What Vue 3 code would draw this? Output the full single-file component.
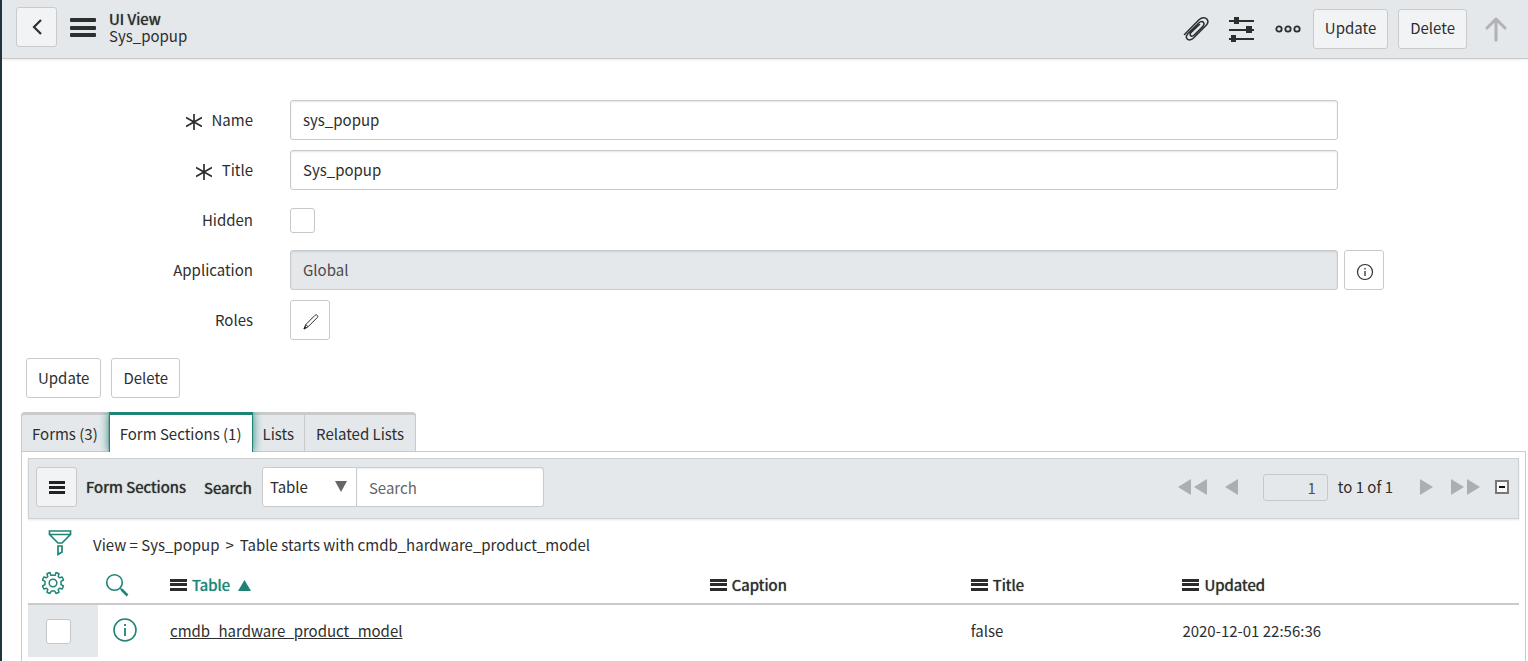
<script setup>
import { ref } from 'vue'

const name = ref('sys_popup')
const title = ref('Sys_popup')
const hidden = ref(false)
const searchField = ref('Table')
const searchText = ref('')
const activeTab = ref('Form Sections (1)')
const tabs = ['Forms (3)', 'Form Sections (1)', 'Lists', 'Related Lists']
const columns = [
  { label: 'Table', cls: 'col-table', sorted: true },
  { label: 'Caption', cls: 'col-caption' },
  { label: 'Title', cls: 'col-title' },
  { label: 'Updated', cls: 'col-updated' },
]
const rows = [
  { table: 'cmdb_hardware_product_model', caption: '', title: 'false', updated: '2020-12-01 22:56:36' },
]
</script>

<template>
  <div class="page">
    <header class="header">
      <button class="btn back" aria-label="Back">
        <svg width="12" height="18" viewBox="0 0 12 18"><path d="M10 2 3 9l7 7" fill="none" stroke="#2e2e2e" stroke-width="2.2" /></svg>
      </button>
      <button class="bare menu" aria-label="Additional actions">
        <svg width="26" height="20" viewBox="0 0 26 20" fill="#2b2f2f"><rect y="0" width="26" height="4" rx="1" /><rect y="8" width="26" height="4" rx="1" /><rect y="15" width="26" height="4" rx="1" /></svg>
      </button>
      <div class="heading">
        <h1 class="bold">UI View</h1>
        <span>Sys_popup</span>
      </div>
      <div class="actions">
        <button class="bare clip" aria-label="Attachments">
          <svg width="28" height="28" viewBox="0 0 28 28" fill="none" stroke="#2b2f2f" stroke-width="1.500" stroke-linecap="round" stroke-linejoin="round"><path d="M2.500 19.500 17 4.800C20 2 23.500 2.200 25 4.200C26.500 6.200 26 8.500 24 10.500L12 22.500C9.500 25 6.700 25.600 5.200 24C3.600 22.300 4.300 20.300 6.300 18.300L16.500 8.200C18.300 6.500 20.200 6.200 21.400 7.400C22.500 8.500 22 10.300 20.500 11.800L12.200 20C11 21.200 9.500 21.500 8.600 20.600C7.700 19.700 8.100 18.300 9.300 17.100L17.500 9.500" /></svg>
        </button>
        <button class="bare sliders" aria-label="Personalize form">
          <svg width="25" height="26" viewBox="0 0 25 26" fill="#2b2f2f"><rect y="4" width="25" height="2" /><rect y="13" width="25" height="2" /><rect y="22" width="25" height="2" /><rect x="5" y="1" width="5" height="7" /><rect x="17" y="10" width="6" height="7" /><rect x="2" y="19" width="5" height="7" /></svg>
        </button>
        <button class="bare dots" aria-label="More options">
          <svg width="26" height="8" viewBox="0 0 26 8" fill="none" stroke="#2b2f2f" stroke-width="1.8"><circle cx="4" cy="4" r="2.7" /><circle cx="13" cy="4" r="2.7" /><circle cx="22" cy="4" r="2.7" /></svg>
        </button>
        <button class="btn">Update</button>
        <button class="btn">Delete</button>
        <button class="bare up" aria-label="Previous record">
          <svg width="22" height="26" viewBox="0 0 22 26" fill="none" stroke="#b0b2b4" stroke-width="3" stroke-linecap="round" stroke-linejoin="round"><path d="M11 24V3M2 12l9-9 9 9" /></svg>
        </button>
      </div>
    </header>

    <main class="main">
      <form class="form" @submit.prevent>
        <label for="name"><svg class="star" width="16" height="18" viewBox="0 0 16 18"><path d="M8 1v16M0 4.500l16 9M16 4.500l-16 9" stroke="#2e2e2e" stroke-width="1.7" /></svg>Name</label>
        <input id="name" v-model="name" class="field" type="text" />
        <label for="title"><svg class="star" width="16" height="18" viewBox="0 0 16 18"><path d="M8 1v16M0 4.500l16 9M16 4.500l-16 9" stroke="#2e2e2e" stroke-width="1.7" /></svg>Title</label>
        <input id="title" v-model="title" class="field" type="text" />
        <label for="hidden">Hidden</label>
        <input id="hidden" v-model="hidden" class="check" type="checkbox" />
        <label for="application">Application</label>
        <input id="application" class="field readonly" type="text" value="Global" readonly />
        <button class="btn square" type="button" aria-label="Preview application">
          <svg class="glyph" width="18" height="18" viewBox="0 0 18 18"><circle cx="9" cy="9" r="7.500" fill="none" stroke="#2e2e2e" stroke-width="1.2" /><path d="M9 8v5M9 5v1.500" stroke="#2e2e2e" stroke-width="1.3" /></svg>
        </button>
        <label for="roles">Roles</label>
        <button id="roles" class="btn square" type="button" aria-label="Edit roles">
          <svg class="glyph" width="16" height="16" viewBox="0 0 16 16" fill="none" stroke="#2e2e2e" stroke-width="1" stroke-linejoin="round"><path d="M1 15l1.800-4.500L12 1.300c.8-.7 1.600-.5 2.200 0 .7.700.8 1.500.1 2.200L5 12.800zM2.800 10.500 5 12.800" /><path d="M1 15l1.200-2.500 1.200 1.300z" fill="#2e2e2e" /></svg>
        </button>
      </form>

      <div class="form-actions">
        <button class="btn">Update</button>
        <button class="btn">Delete</button>
      </div>

      <nav class="tabs" role="tablist">
        <button v-for="tab in tabs" :key="tab" role="tab" class="tab" :class="{ active: tab === activeTab }" :aria-selected="tab === activeTab" @click="activeTab = tab">{{ tab }}</button>
      </nav>

      <section class="panel">
        <div class="toolbar">
          <button class="btn list-menu" aria-label="List controls">
            <svg width="16" height="13" viewBox="0 0 16 13" fill="#222"><rect width="16" height="3" /><rect y="5" width="16" height="3" /><rect y="10" width="16" height="3" /></svg>
          </button>
          <h2 class="bold">Form Sections</h2>
          <label class="bold search-label" for="search">Search</label>
          <div class="search">
            <div class="select-wrap">
              <select v-model="searchField" aria-label="Search field">
                <option>Table</option><option>Caption</option><option>Title</option><option>Updated</option>
              </select>
              <svg class="caret" width="12" height="11" viewBox="0 0 12 11"><path d="M0 0h12L6 11z" fill="#666" /></svg>
            </div>
            <input id="search" v-model="searchText" type="text" placeholder="Search" />
          </div>
          <div class="pager">
            <button class="bare" aria-label="First page"><svg width="29" height="16" viewBox="0 0 29 16" fill="#acafb1"><path d="M13 0v16L0 8zM29 0v16L16 8z" /></svg></button>
            <button class="bare prev" aria-label="Previous page"><svg width="13" height="16" viewBox="0 0 13 16" fill="#acafb1"><path d="M13 0v16L0 8z" /></svg></button>
            <input class="page-no" type="text" value="1" aria-label="Row number" />
            <span class="range">to 1 of 1</span>
            <button class="bare next" aria-label="Next page"><svg width="13" height="16" viewBox="0 0 13 16" fill="#acafb1"><path d="M0 0v16l13-8z" /></svg></button>
            <button class="bare last" aria-label="Last page"><svg width="29" height="16" viewBox="0 0 29 16" fill="#acafb1"><path d="M0 0v16l13-8zM16 0v16l13-8z" /></svg></button>
            <button class="bare collapse" aria-label="Collapse list"><svg width="14" height="14" viewBox="0 0 14 14"><rect x="1" y="1" width="12" height="12" fill="#f7f7f7" stroke="#777" stroke-width="2" /><path d="M4 7h6" stroke="#111" stroke-width="2" /></svg></button>
          </div>
        </div>

        <div class="filter">
          <button class="bare" aria-label="Show filter">
            <svg width="24" height="26" viewBox="0 0 24 26" fill="none" stroke="#1f8476" stroke-width="1.7"><path d="M1.500 1h21v3.500L14 13h-4L1.500 4.500zM1.500 4.500h21M10 16h4v6l-4 2.500z" /></svg>
          </button>
          <a href="#">View = Sys_popup</a><span class="gt">&gt;</span><a href="#">Table starts with cmdb_hardware_product_model</a>
        </div>

        <table>
          <thead>
            <tr>
              <th class="col-check">
                <button class="bare" aria-label="Personalize list">
                  <svg width="24" height="24" viewBox="0 0 24 24" fill="none" stroke="#1f8476" stroke-width="1.5" stroke-linejoin="round"><path d="M9.800 4.200 9 1.500l-3 1.300.8 2.700-1.300 1.300-2.700-.8L1.500 9l2.500 1.300v3.400L1.500 15l1.300 3 2.700-.8 1.300 1.300-.8 2.700 3 1.300 1.300-2.500h3.400l1.300 2.500 3-1.300-.8-2.700 1.300-1.300 2.700.8 1.300-3-2.500-1.300v-3.400L22.500 9l-1.300-3-2.700.8-1.300-1.300.8-2.700-3-1.300-.8 2.700z" /><circle cx="12" cy="12" r="3.800" /></svg>
                </button>
              </th>
              <th class="col-info">
                <button class="bare" aria-label="Search list">
                  <svg width="24" height="24" viewBox="0 0 24 24" fill="none" stroke="#1f8476" stroke-width="1.600"><circle cx="9.500" cy="9.500" r="7.800" /><path d="M15.200 15.200l1.800 1.800" /><path d="M16.500 16.500l6 6" stroke-width="2.500" /></svg>
                </button>
              </th>
              <th v-for="c in columns" :key="c.label" :class="[c.cls, { sorted: c.sorted }]" scope="col">
                <div class="th">
                  <svg width="17" height="12" viewBox="0 0 17 12" fill="#2b2b2b"><rect width="17" height="3" /><rect y="4" width="17" height="3" /><rect y="9" width="17" height="3" /></svg>
                  <span class="bold">{{ c.label }}</span>
                  <svg v-if="c.sorted" class="asc" width="13" height="11" viewBox="0 0 13 11"><path d="M0 11h13L6.500 0z" fill="#1f8476" /></svg>
                </div>
              </th>
            </tr>
          </thead>
          <tbody>
            <tr v-for="r in rows" :key="r.table">
              <td class="col-check shaded"><input class="check" type="checkbox" aria-label="Select record" /></td>
              <td class="col-info">
                <button class="bare" aria-label="Preview record">
                  <svg width="26" height="26" viewBox="0 0 26 26"><circle cx="13" cy="13" r="11" fill="none" stroke="#1f8476" stroke-width="1.600" /><path d="M13 11v8M13 7v2" stroke="#1f8476" stroke-width="1.800" /></svg>
                </button>
              </td>
              <td><a class="record" href="#">{{ r.table }}</a></td>
              <td>{{ r.caption }}</td>
              <td>{{ r.title }}</td>
              <td>{{ r.updated }}</td>
            </tr>
          </tbody>
        </table>
      </section>
    </main>
  </div>
</template>

<style>
body { margin: 0; background: #fff; }
</style>

<style scoped>
.page, .page * { box-sizing: border-box; }
.page {
  min-height: 100vh;
  display: flex;
  flex-direction: column;
  border-left: 2px solid #20353f;
  color: #2e2e2e;
  font-family: "Noto Sans CJK SC", "Noto Sans", sans-serif;
  font-size: 15px;
  line-height: 20px;
}
button, input, select { font: inherit; color: inherit; }
svg { display: block; flex: none; }
h1, h2 { margin: 0; font-size: 15px; }
.bold { font-weight: 400; text-shadow: 0 0 1px currentColor; }
.bare { padding: 0; border: 0; background: none; }
.btn {
  height: 40px;
  padding: 0 11px;
  border: 1px solid #c8cacc;
  border-radius: 3px;
  background: #fff;
}
.square { width: 40px; padding: 0; display: flex; align-items: center; justify-content: center; }

.header {
  height: 59px;
  display: flex;
  align-items: center;
  padding: 0 21px 4px 14px;
  background: #e4e8eb;
  border-bottom: 1px solid #c5c9cc;
  box-shadow: 0 1px 3px rgba(0, 0, 0, 0.08);
}
.header .btn, .list-menu { background: #f1f3f5; }
.back { width: 41px; padding: 0; display: flex; align-items: center; justify-content: center; }
.menu { margin: 2px 0 0 13px; }
.heading { display: grid; gap: 1px; margin-left: 13px; line-height: 16px; }
.heading h1 { line-height: 16px; }
.actions { display: flex; align-items: center; margin-left: auto; padding-top: 3px; }
.sliders { margin-left: 19px; }
.dots { margin: 0 12px 0 21px; }
.actions .btn { padding-bottom: 1px; }
.actions .btn + .btn { margin-left: 10px; }
.up { margin-left: 18px; }

.main { flex: 1; display: flex; flex-direction: column; padding: 41px 2px 0 19px; }
.form {
  display: grid;
  grid-template-columns: 232px minmax(0, 1fr) 40px;
  column-gap: 6px;
  row-gap: 10px;
  grid-auto-rows: 40px;
  align-items: center;
  padding-right: 142px;
}
.form label { grid-column: 1; display: flex; align-items: center; justify-content: flex-end; }
.form label + * { margin-left: 31px; }
.star { margin: 3px 10px 0 0; }
.field {
  height: 40px;
  min-width: 0;
  padding: 0 12px 2px;
  border: 1px solid #c8cacc;
  border-radius: 3px;
  background: #fff;
  box-shadow: inset 0 1px 2px rgba(0, 0, 0, 0.1);
}
.readonly { background: #e4e8eb; color: #4a4a4a; }
.check {
  appearance: none;
  display: block;
  width: 25px;
  height: 25px;
  margin: 0;
  border: 1px solid #c5c7c9;
  border-radius: 3px;
  background: #fff;
}
.glyph { margin: 4px 0 0 2px; }

.form-actions { display: flex; gap: 10px; margin: 18px 0 0 5px; }

.tabs { display: flex; margin-top: 14px; }
.tab {
  height: 39px;
  padding: 2px 10px 0;
  border: 0 solid #c8cacc;
  border-top-width: 3px;
  border-right-width: 1px;
  background: #e4e8eb;
}
.tab:first-child { border-left-width: 1px; border-top-left-radius: 4px; }
.tab:last-child { border-top-right-radius: 4px; padding: 2px 11px 0; }
.tab.active {
  position: relative;
  height: 40px;
  margin-bottom: -1px;
  padding-bottom: 1px;
  border-color: #1f8476;
  border-left-width: 1px;
  background: #fff;
  box-shadow: 0 0 9px #1f8476;
  clip-path: inset(0 -10px 0 -10px);
}

.panel { flex: 1; border: 1px solid #c8cacc; border-bottom: 0; padding: 6px 6px 0; }
.toolbar {
  height: 61px;
  display: flex;
  align-items: center;
  padding: 0 9px 3px 7px;
  background: #e4e8eb;
  border: 1px solid #cdd1d4;
  box-shadow: 0 1px 2px rgba(0, 0, 0, 0.1);
}
.list-menu { width: 41px; padding: 0; display: flex; align-items: center; justify-content: center; }
.toolbar h2 { margin-left: 9px; }
.search-label { margin: 2px 10px 0 18px; }
.search { display: flex; }
.select-wrap { position: relative; width: 95px; }
.caret { position: absolute; right: 10px; top: 14px; pointer-events: none; }
.search select {
  appearance: none;
  width: 100%;
  height: 40px;
  padding: 0 7px;
  border: 1px solid #c8cacc;
  border-radius: 3px 0 0 3px;
  background: #fff;
}
.search input {
  width: 187px;
  height: 40px;
  padding: 0 12px;
  border: 1px solid #c8cacc;
  border-left: 0;
  border-radius: 0 3px 3px 0;
  box-shadow: inset 0 1px 2px rgba(0, 0, 0, 0.08);
}
.search input::placeholder { color: #666; opacity: 1; }
.pager { display: flex; align-items: center; margin-left: auto; }
.prev { margin: 0 25px 0 18px; }
.page-no {
  width: 65px;
  height: 27px;
  padding: 0 11px;
  border: 1px solid #c5c9cb;
  border-radius: 3px;
  background: #e4e8eb;
  color: #505050;
  text-align: right;
}
.range { margin: 0 27px 0 10px; white-space: nowrap; }
.last { margin: 0 15px 0 18px; }

.filter { height: 47px; display: flex; align-items: center; padding: 5px 0 0 20px; }
.filter .bare { margin: 0 21px 4px 0; }
.filter a { color: inherit; text-decoration: none; }
.gt { margin: 0 6px; }

table { width: 100%; border-collapse: collapse; table-layout: fixed; }
th { height: 38px; padding: 0; border-bottom: 2px solid #c8cacc; text-align: left; }
td { height: 53px; padding: 0; }
.col-check { width: 70px; }
.col-info { width: 72px; }
.col-table { width: 36.2%; }
.col-caption { width: 17.5%; }
.col-title { width: 14.2%; }
th.col-check { padding-left: 13px; }
td.col-check { padding-left: 18px; }
.shaded { background: #e4e8eb; }
th.col-info { padding: 4px 0 0 7px; }
td.col-info { padding: 2px 0 0 14px; }
.th { display: flex; align-items: center; gap: 5px; }
.sorted { color: #1f8476; }
.asc { margin: 2px 0 0 3px; }
.record { color: inherit; text-decoration: underline; }
</style>
